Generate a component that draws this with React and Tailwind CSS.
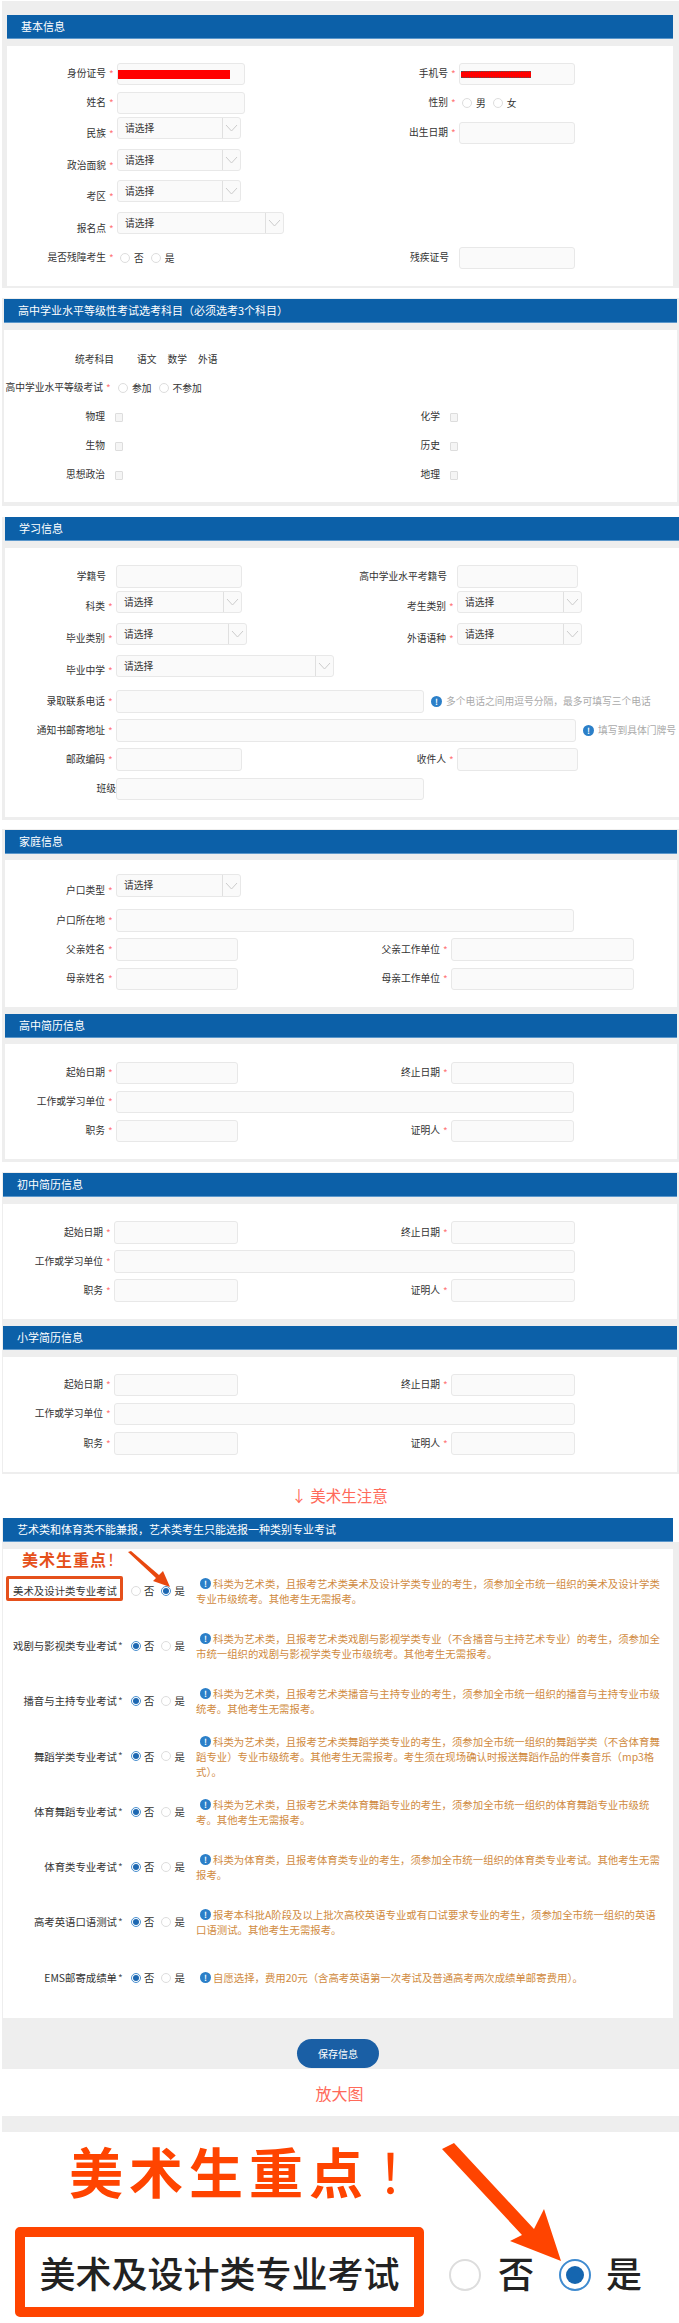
import React from 'react';
import clsx from 'clsx';

const BLUE = 'bg-[#0c60a8]';

function Star() {
    return <span className="w-[11px] shrink-0 pl-[3px] text-left text-[10px] leading-none text-[#f77]">*</span>;
}

function Label({ className, text, noStar }) {
    return (
        <span className={clsx('flex shrink-0 items-center justify-end self-stretch whitespace-nowrap text-[9.75px] leading-none text-[#333]', className)}>
            {text}
            {!noStar && <Star />}
        </span>
    );
}

function Input({ className, children }) {
    return (
        <div className={clsx('flex shrink-0 items-center rounded-[3px] border border-[#e8e8e8] bg-[#fafafa]', className)}>
            {children}
        </div>
    );
}

function Select({ className }) {
    return (
        <div className={clsx('flex shrink-0 items-stretch rounded-[3px] border border-[#e8e8e8] bg-[#fafafa]', className)}>
            <span className="flex-1 pl-[7px] text-[9.75px] leading-[20px] text-[#333]">请选择</span>
            <span className="flex w-[18px] items-center justify-center border-l border-[#e0e0e0]">
                <svg width="13" height="8" viewBox="0 0 13 8" fill="none" stroke="#ccc" strokeWidth="1">
                    <path d="M1 1l5.5 6L12 1" />
                </svg>
            </span>
        </div>
    );
}

function Radio({ on, className }) {
    return (
        <span className={clsx('flex h-[10px] w-[10px] shrink-0 items-center justify-center rounded-full border bg-white', on ? 'border-[#4a90cf]' : 'border-[#ddd]', className)}>
            {on && <span className="h-[6px] w-[6px] rounded-full bg-[#1d68b2]" />}
        </span>
    );
}

function RadioPair({ a, b }) {
    return (
        <div className="flex items-center text-[9.75px] text-[#333]">
            <Radio className="ml-[3px]" />
            <span className="ml-[4px]">{a}</span>
            <Radio className="ml-[7px]" />
            <span className="ml-[4px]">{b}</span>
        </div>
    );
}

function Header({ children, className }) {
    return (
        <div className={clsx('h-[24px] border-b border-[#5b97cb] pl-[14px] text-[11px] leading-[23px] text-white', BLUE, className)}>
            {children}
        </div>
    );
}

function Check() {
    return <span className="ml-[10px] h-[9px] w-[8px] shrink-0 rounded-[1px] border border-[#ddd] bg-[#f5f5f5]" />;
}

function Hint({ children }) {
    return (
        <>
            <Info className="ml-[7px]" />
            <span className="ml-[4px] whitespace-nowrap text-[9.75px] text-[#aaa]">{children}</span>
        </>
    );
}

function Info({ className }) {
    return (
        <span className={clsx('inline-flex h-[11px] w-[11px] shrink-0 items-center justify-center rounded-full bg-[#2b7fc8] text-[8px] font-bold leading-none text-white', className)}>!</span>
    );
}

function Subject({ a, b, className }) {
    return (
        <div className={clsx('flex h-[16px] items-center', className)}>
            <div className="flex w-[300px] items-center">
                <Label className="w-[101px]" text={a} noStar />
                <Check />
            </div>
            <Label className="w-[136px]" text={b} noStar />
            <Check />
        </div>
    );
}

// 高中/初中/小学 share the same three rows
function Resume({ labelW, inputW, rightLabelW, rightW, wideW, rows, rowGap, panelH }) {
    return (
        <div className={clsx('bg-white', panelH)}>
            <div className={clsx('flex', rows[0])}>
                <div className="flex w-[300px]">
                    <Label className={labelW} text="起始日期" />
                    <Input className={inputW} />
                </div>
                <Label className={rightLabelW} text="终止日期" />
                <Input className={rightW} />
            </div>
            <div className={clsx('flex', rowGap, rows[1])}>
                <Label className={labelW} text="工作或学习单位" />
                <Input className={wideW} />
            </div>
            <div className={clsx('flex', rowGap, rows[2])}>
                <div className="flex w-[300px]">
                    <Label className={labelW} text="职务" />
                    <Input className={inputW} />
                </div>
                <Label className={rightLabelW} text="证明人" />
                <Input className={rightW} />
            </div>
        </div>
    );
}

const EXAMS = [
    { name: '美术及设计类专业考试', mt: 'mt-[26px]', yes: true, lines: ['科类为艺术类，且报考艺术类美术及设计学类专业的考生，须参加全市统一组织的美术及设计学类', '专业市级统考。其他考生无需报考。'] },
    { name: '戏剧与影视类专业考试', mt: 'mt-[25px]', lines: ['科类为艺术类，且报考艺术类戏剧与影视学类专业（不含播音与主持艺术专业）的考生，须参加全', '市统一组织的戏剧与影视学类专业市级统考。其他考生无需报考。'] },
    { name: '播音与主持专业考试', mt: 'mt-[25px]', lines: ['科类为艺术类，且报考艺术类播音与主持专业的考生，须参加全市统一组织的播音与主持专业市级', '统考。其他考生无需报考。'] },
    { name: '舞蹈学类专业考试', mt: 'mt-[18px]', lines: ['科类为艺术类，且报考艺术类舞蹈学类专业的考生，须参加全市统一组织的舞蹈学类（不含体育舞', '蹈专业）专业市级统考。其他考生无需报考。考生须在现场确认时报送舞蹈作品的伴奏音乐（mp3格', '式）。'] },
    { name: '体育舞蹈专业考试', mt: 'mt-[18px]', lines: ['科类为艺术类，且报考艺术类体育舞蹈专业的考生，须参加全市统一组织的体育舞蹈专业市级统', '考。其他考生无需报考。'] },
    { name: '体育类专业考试', mt: 'mt-[25px]', lines: ['科类为体育类，且报考体育类专业的考生，须参加全市统一组织的体育类专业考试。其他考生无需', '报考。'] },
    { name: '高考英语口语测试', mt: 'mt-[25px]', lines: ['报考本科批A阶段及以上批次高校英语专业或有口试要求专业的考生，须参加全市统一组织的英语', '口语测试。其他考生无需报考。'] },
    { name: 'EMS邮寄成绩单', mt: 'mt-[33px]', lines: ['自愿选择，费用20元（含高考英语第一次考试及普通高考两次成绩单邮寄费用）。'] },
];

function ExamRow({ exam }) {
    return (
        <div className={clsx('flex items-center', exam.mt)}>
            <span className="flex w-[120px] shrink-0 items-center justify-end whitespace-nowrap text-[10.4px] text-[#333]">
                {exam.name}
                <span className="w-[6px] pl-[1px] text-left text-[10px] leading-none text-[#555]">{exam.yes ? '' : '*'}</span>
            </span>
            <div className="flex w-[73px] shrink-0 items-center pl-[8px] text-[10.4px] text-[#333]">
                <Radio on={!exam.yes} />
                <span className="ml-[3px]">否</span>
                <Radio on={exam.yes} className="ml-[7px]" />
                <span className="ml-[3px]">是</span>
            </div>
            <div className="whitespace-nowrap text-[10.4px] leading-[15px] text-[#d08a3e]">
                {exam.lines.map((line, i) => (
                    <div key={line} className="flex h-[15px] items-center">
                        {i === 0 && <Info className="ml-[4px] mr-[2px]" />}
                        {line}
                    </div>
                ))}
            </div>
        </div>
    );
}

function BigRadio({ on, className }) {
    return (
        <span className={clsx('flex h-[32px] w-[32px] shrink-0 items-center justify-center rounded-full border-[2px] bg-white', on ? 'border-[#3f8bd0]' : 'border-[#ddd]', className)}>
            {on && <span className="h-[18px] w-[18px] rounded-full bg-[#1566b0]" />}
        </span>
    );
}

export default function App() {
    return (
        <div className="h-[2323px] w-[679px] overflow-hidden bg-white pt-[1px] font-['Noto_Sans_CJK_SC','Liberation_Sans',sans-serif]">
            {/* 基本信息 */}
            <div className="ml-[2px] h-[287px] bg-[#eee] pl-[5px] pr-[6px] pt-[14px]">
                <Header className="h-[23px]">基本信息</Header>
                <div className="mt-[7px] h-[240px] bg-white">
                    <div className="flex pt-[17px]">
                        <div className="flex w-[310px]">
                            <Label className="w-[110px]" text="身份证号" />
                            <Input className="h-[22px] w-[128px]">
                                <span className="h-[9px] w-[112px] bg-[#f00]" />
                            </Input>
                        </div>
                        <Label className="w-[142px]" text="手机号" />
                        <Input className="h-[22px] w-[116px]">
                            <span className="ml-[1px] h-[7px] w-[70px] border-y border-dotted border-[#555] bg-[#f00]" />
                        </Input>
                    </div>
                    <div className="mt-[7px] flex h-[22px]">
                        <div className="flex w-[310px]">
                            <Label className="w-[110px]" text="姓名" />
                            <Input className="h-[22px] w-[128px]" />
                        </div>
                        <Label className="w-[142px]" text="性别" />
                        <RadioPair a="男" b="女" />
                    </div>
                    <div className="mt-[3px] flex h-[22px]">
                        <div className="flex w-[310px]">
                            <Label className="w-[110px] pt-[12px]" text="民族" />
                            <Select className="h-[22px] w-[124px]" />
                        </div>
                        <div className="mt-[5px] flex h-[22px]">
                            <Label className="w-[142px]" text="出生日期" />
                            <Input className="h-[22px] w-[116px]" />
                        </div>
                    </div>
                    <div className="mt-[10px] flex">
                        <Label className="w-[110px] pt-[12px]" text="政治面貌" />
                        <Select className="h-[22px] w-[124px]" />
                    </div>
                    <div className="mt-[9px] flex">
                        <Label className="w-[110px] pt-[12px]" text="考区" />
                        <Select className="h-[22px] w-[124px]" />
                    </div>
                    <div className="mt-[10px] flex">
                        <Label className="w-[110px] pt-[12px]" text="报名点" />
                        <Select className="h-[22px] w-[167px]" />
                    </div>
                    <div className="mt-[13px] flex h-[22px]">
                        <div className="flex w-[310px]">
                            <Label className="w-[110px]" text="是否残障考生" />
                            <RadioPair a="否" b="是" />
                        </div>
                        <Label className="w-[142px] pr-[10px]" text="残疾证号" noStar />
                        <Input className="h-[22px] w-[116px]" />
                    </div>
                </div>
            </div>

            {/* 选考科目 */}
            <div className="ml-[2px] mt-[10px] h-[208px] bg-[#eee] pl-[2px] pr-[2px] pt-[1px]">
                <Header>高中学业水平等级性考试选考科目（必须选考3个科目）</Header>
                <div className="mt-[7px] h-[172px] bg-white pt-[21px]">
                    <div className="flex h-[16px] items-center text-[9.75px] text-[#333]">
                        <span className="w-[110px] text-right">统考科目</span>
                        <span className="ml-[23px]">语文</span>
                        <span className="ml-[11px]">数学</span>
                        <span className="ml-[11px]">外语</span>
                    </div>
                    <div className="mt-[13px] flex h-[16px] items-center">
                        <Label className="w-[110px]" text="高中学业水平等级考试" />
                        <div className="flex items-center text-[9.75px] text-[#333]">
                            <Radio className="ml-[4px]" />
                            <span className="ml-[4px]">参加</span>
                            <Radio className="ml-[7px]" />
                            <span className="ml-[4px]">不参加</span>
                        </div>
                    </div>
                    <Subject a="物理" b="化学" className="mt-[13px]" />
                    <Subject a="生物" b="历史" className="mt-[13px]" />
                    <Subject a="思想政治" b="地理" className="mt-[13px]" />
                </div>
            </div>

            {/* 学习信息 */}
            <div className="ml-[2px] mt-[11px] h-[303px] bg-[#eee] pl-[3px]">
                <Header>学习信息</Header>
                <div className="mt-[7px] h-[269px] bg-white pt-[17px]">
                    <div className="flex">
                        <div className="flex w-[330px]">
                            <Label className="w-[111px] pr-[10px]" text="学籍号" noStar />
                            <Input className="h-[23px] w-[126px]" />
                        </div>
                        <Label className="w-[122px] pr-[10px]" text="高中学业水平考籍号" noStar />
                        <Input className="h-[23px] w-[121px]" />
                    </div>
                    <div className="mt-[3px] flex">
                        <div className="flex w-[330px]">
                            <Label className="w-[111px] pt-[10px]" text="科类" />
                            <Select className="h-[22px] w-[126px]" />
                        </div>
                        <Label className="w-[122px] pt-[10px]" text="考生类别" />
                        <Select className="h-[22px] w-[125px]" />
                    </div>
                    <div className="mt-[10px] flex">
                        <div className="flex w-[330px]">
                            <Label className="w-[111px] pt-[10px]" text="毕业类别" />
                            <Select className="h-[22px] w-[131px]" />
                        </div>
                        <Label className="w-[122px] pt-[10px]" text="外语语种" />
                        <Select className="h-[22px] w-[125px]" />
                    </div>
                    <div className="mt-[10px] flex">
                        <Label className="w-[111px] pt-[10px]" text="毕业中学" />
                        <Select className="h-[22px] w-[218px]" />
                    </div>
                    <div className="mt-[13px] flex items-center">
                        <Label className="w-[111px]" text="录取联系电话" />
                        <Input className="h-[23px] w-[308px]" />
                        <Hint>多个电话之间用逗号分隔，最多可填写三个电话</Hint>
                    </div>
                    <div className="mt-[6px] flex items-center">
                        <Label className="w-[111px]" text="通知书邮寄地址" />
                        <Input className="h-[23px] w-[460px]" />
                        <Hint>填写到具体门牌号</Hint>
                    </div>
                    <div className="mt-[6px] flex">
                        <div className="flex w-[330px]">
                            <Label className="w-[111px]" text="邮政编码" />
                            <Input className="h-[23px] w-[126px]" />
                        </div>
                        <Label className="w-[122px]" text="收件人" />
                        <Input className="h-[23px] w-[121px]" />
                    </div>
                    <div className="mt-[7px] flex">
                        <Label className="w-[111px]" text="班级" noStar />
                        <Input className="h-[22px] w-[308px]" />
                    </div>
                </div>
            </div>

            {/* 家庭信息 + 高中简历 */}
            <div className="ml-[2px] mt-[9px] h-[333px] bg-[#eee] pl-[3px] pr-[2px] pt-[1px]">
                <Header>家庭信息</Header>
                <div className="mt-[6px] h-[147px] bg-white pt-[14px]">
                    <div className="flex">
                        <Label className="w-[111px] pt-[11px]" text="户口类型" />
                        <Select className="h-[23px] w-[125px]" />
                    </div>
                    <div className="mt-[12px] flex">
                        <Label className="w-[111px]" text="户口所在地" />
                        <Input className="h-[23px] w-[458px]" />
                    </div>
                    <div className="mt-[6px] flex">
                        <div className="flex w-[300px]">
                            <Label className="w-[111px]" text="父亲姓名" />
                            <Input className="h-[23px] w-[122px]" />
                        </div>
                        <Label className="w-[146px]" text="父亲工作单位" />
                        <Input className="h-[23px] w-[183px]" />
                    </div>
                    <div className="mt-[7px] flex">
                        <div className="flex w-[300px]">
                            <Label className="w-[111px]" text="母亲姓名" />
                            <Input className="h-[22px] w-[122px]" />
                        </div>
                        <Label className="w-[146px]" text="母亲工作单位" />
                        <Input className="h-[22px] w-[183px]" />
                    </div>
                </div>
                <Header className="mt-[7px]">高中简历信息</Header>
                <div className="mt-[6px]">
                    <Resume
                        panelH="h-[115px] pt-[18px]"
                        labelW="w-[111px]"
                        inputW="w-[122px]"
                        rightLabelW="w-[146px]"
                        rightW="w-[123px]"
                        wideW="w-[458px]"
                        rows={['h-[22px]', 'h-[22px]', 'h-[22px]']}
                        rowGap="mt-[7px]"
                    />
                </div>
            </div>

            {/* 初中 + 小学 */}
            <div className="ml-[2px] mt-[10px] h-[302px] bg-[#eee] pl-[1px] pt-[1px]">
                <Header className="mr-[2px]">初中简历信息</Header>
                <div className="mr-[2px] mt-[7px]">
                    <Resume
                        panelH="h-[115px] pt-[17px]"
                        labelW="w-[111px]"
                        inputW="w-[124px]"
                        rightLabelW="w-[148px]"
                        rightW="w-[124px]"
                        wideW="w-[461px]"
                        rows={['h-[23px]', 'h-[23px]', 'h-[23px]']}
                        rowGap="mt-[6px]"
                    />
                </div>
                <Header className="mr-[2px] mt-[7px]">小学简历信息</Header>
                <div className="mr-[2px] mt-[7px]">
                    <Resume
                        panelH="h-[115px] pt-[17px]"
                        labelW="w-[111px]"
                        inputW="w-[124px]"
                        rightLabelW="w-[148px]"
                        rightW="w-[124px]"
                        wideW="w-[461px]"
                        rows={['h-[22px]', 'h-[22px]', 'h-[23px]']}
                        rowGap="mt-[7px]"
                    />
                </div>
            </div>

            <div className="flex h-[44px] items-center justify-center text-[15.5px] text-[#ff6a5a]">↓ 美术生注意</div>

            {/* 艺术类专业考试 */}
            <div className="ml-[2px] h-[551px] bg-[#eee] pl-[1px]">
                <div className="flex">
                    <Header className="flex-1">艺术类和体育类不能兼报，艺术类考生只能选报一种类别专业考试</Header>
                    <div className="h-[24px] w-[6px] bg-white" />
                </div>
                <div className="relative mr-[6px] mt-[7px] h-[469px] bg-white pt-px">
                    <span className="absolute left-[19px] top-[-2px] whitespace-nowrap text-[16px] font-bold tracking-[1px] text-[#e5501b]">美术生重点<span className="font-normal">！</span></span>
                    <svg className="absolute left-[122px] top-[2px]" width="50" height="38" viewBox="0 0 50 38" fill="#e8480f">
                        <path d="M3 1L6 0 34 24 38 20 45 36 28 30 31 27Z" />
                    </svg>
                    <div className="absolute left-[3px] top-[27px] h-[25px] w-[117px] rounded-[2px] border-[3px] border-[#e5501b]" />
                    {EXAMS.map(exam => <ExamRow key={exam.name} exam={exam} />)}
                </div>
                <div className="ml-[294px] mt-[21px] flex h-[29px] w-[82px] items-center justify-center rounded-[18px] bg-[#1a5fa5] text-[10px] text-white">保存信息</div>
            </div>

            <div className="flex h-[47px] items-center justify-center text-[16px] text-[#ff6a5a]">放大图</div>

            {/* 放大图 */}
            <div className="ml-[2px] h-[16px] bg-[#eee]" />
            <div className="relative">
                <div className="ml-[69px] mt-[3px] whitespace-nowrap text-[54px] font-bold leading-[72px] tracking-[6px] text-[#ff4400]">美术生重点<span className="ml-[8px] font-normal">！</span></div>
                <svg className="absolute left-[430px] top-[8px]" width="140" height="120" viewBox="0 0 140 120" fill="#ff4400">
                    <path d="M12 6L24 0 104 86 114 66 131 118 80 98 92 92Z" />
                </svg>
                <div className="ml-[15px] mt-[20px] flex items-center">
                    <div className="flex h-[90px] w-[409px] items-center justify-center whitespace-nowrap rounded-[5px] border-[10px] border-[#ff4400] text-[36px] font-medium leading-none text-[#222]">美术及设计类专业考试</div>
                    <BigRadio className="ml-[25px] mt-[6px]" />
                    <span className="ml-[17px] text-[36px] font-medium leading-none text-[#222]">否</span>
                    <BigRadio on className="ml-[25px] mt-[6px]" />
                    <span className="ml-[15px] text-[36px] font-medium leading-none text-[#222]">是</span>
                </div>
            </div>
        </div>
    );
}
